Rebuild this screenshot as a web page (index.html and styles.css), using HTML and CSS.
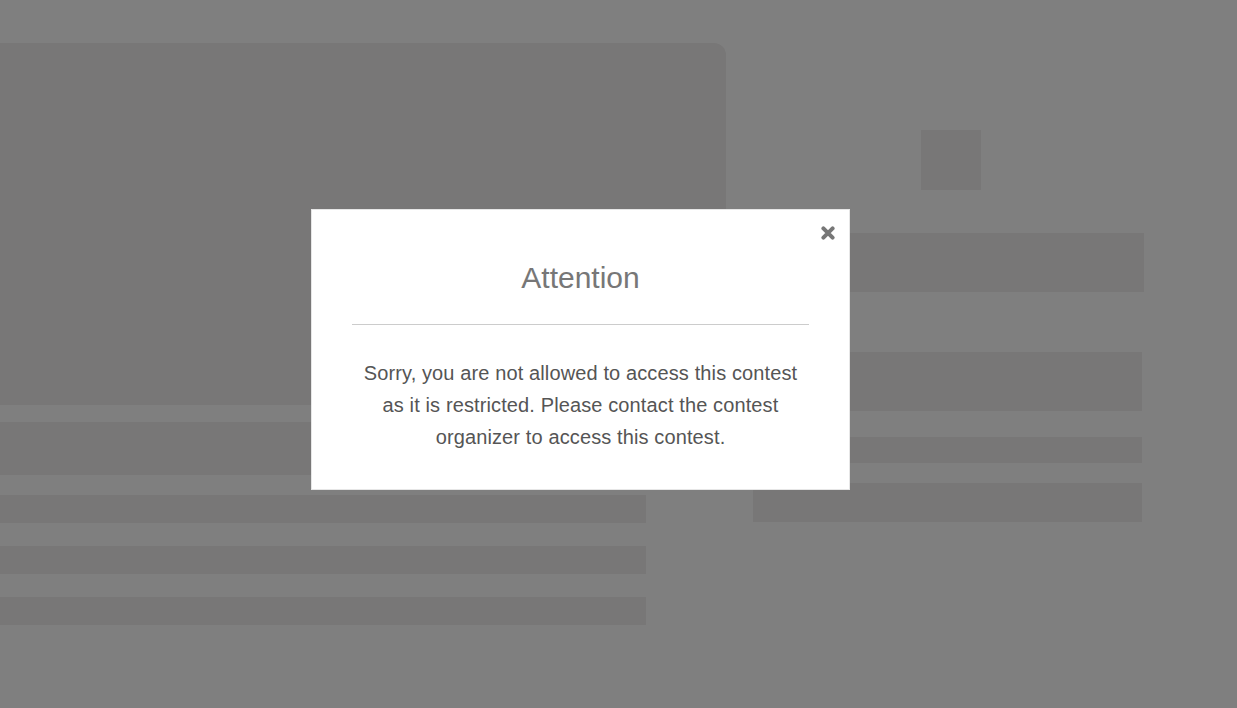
FILE: index.html
```html
<!DOCTYPE html>
<html lang="en">
<head>
  <meta charset="UTF-8" />
  <meta name="viewport" content="width=device-width, initial-scale=1" />
  <title>Contest</title>
  <link rel="stylesheet" href="styles.css">
</head>
<body>
  <div class="page">
    <div class="main-col">
      <div class="sk sk-banner"></div>
      <div class="sk sk-title"></div>
      <div class="sk sk-line"></div>
      <div class="sk sk-line"></div>
      <div class="sk sk-line"></div>
    </div>
    <div class="side-col">
      <div class="sk sk-avatar"></div>
      <div class="sk sk-box sk-box-wide"></div>
      <div class="sk sk-box sk-box-2"></div>
      <div class="sk sk-small"></div>
      <div class="sk sk-btn"></div>
    </div>
  </div>

  <div class="overlay">
    <div class="modal">
      <button class="modal-close" aria-label="Close">
        <svg width="14" height="14" viewBox="0 0 14 14">
          <path d="M2.4 2.4 L11.6 11.6 M11.6 2.4 L2.4 11.6" stroke="currentColor" stroke-width="4" stroke-linecap="round" fill="none" />
        </svg>
      </button>
      <h2 class="modal-title">Attention</h2>
      <hr class="modal-rule" />
      <p class="modal-text">Sorry, you are not allowed to access this contest as it is restricted. Please contact the contest organizer to access this contest.</p>
    </div>
  </div>
</body>
</html>
```

FILE: styles.css
```css
body {
  margin: 0;
  background: #fff;
  font-family: "Liberation Sans", Arial, sans-serif;
  overflow: hidden;
}
.page {
  display: flex;
  gap: 27px;
  padding-top: 43px;
}
.sk {
  background-color: #f0eeee;
}
.main-col {
  width: 726px;
  display: flex;
  flex-direction: column;
}
.sk-banner {
  height: 362px;
  margin-left: -20px;
  border-radius: 12px;
}
.sk-title {
  height: 53px;
  margin-top: 17px;
}
.sk-line {
  width: 646px;
  height: 28px;
  margin-top: 23px;
}
.sk-title + .sk-line {
  margin-top: 20px;
}
.side-col {
  width: 389px;
  display: flex;
  flex-direction: column;
}
.sk-avatar {
  width: 60px;
  height: 60px;
  margin: 87px 0 0 168px;
}
.sk-box {
  height: 59px;
}
.sk-box-wide {
  margin: 43px -2px 0 0;
}
.sk-box-2 {
  margin-top: 60px;
}
.sk-small {
  height: 26px;
  margin-top: 26px;
}
.sk-btn {
  height: 39px;
  margin-top: 20px;
}
.overlay {
  position: fixed;
  inset: 0;
  background: rgba(0, 0, 0, 0.5);
  padding: 209px 0 0 311px;
}
.modal {
  position: relative;
  box-sizing: border-box;
  width: 539px;
  background: #fff;
  border: 1px solid #e6e6e6;
  padding: 50px 40px 36px;
  text-align: center;
}
.modal-close {
  position: absolute;
  top: 16px;
  right: 14px;
  border: none;
  background: none;
  padding: 0;
  color: #777;
  cursor: pointer;
  line-height: 0;
}
.modal-title {
  margin: 0;
  font-size: 30px;
  line-height: 36px;
  font-weight: normal;
  color: #777;
}
.modal-rule {
  margin: 28px 0 0;
  border: none;
  border-top: 1px solid #ccc;
}
.modal-text {
  margin: 32px 0 0;
  padding: 0 8px;
  font-size: 20px;
  line-height: 32px;
  letter-spacing: 0.12px;
  color: #555;
}
```
